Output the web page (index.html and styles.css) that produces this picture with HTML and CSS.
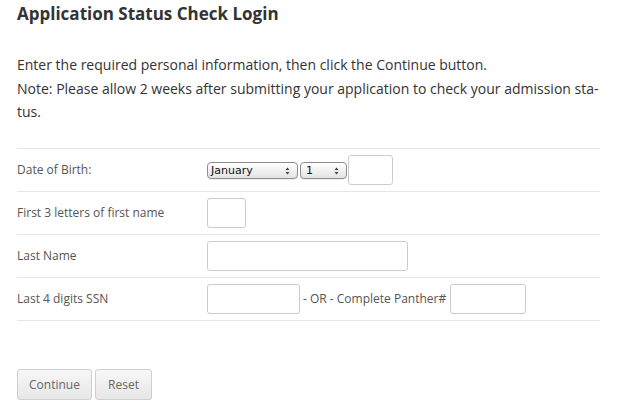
FILE: index.html
```html
<!DOCTYPE html>
<html>
<head>
<meta charset="utf-8">
<link rel="stylesheet" href="styles.css">
</head>
<body>
<div class="page">
  <h1 class="title">Application Status Check Login</h1>
  <p class="intro">Enter the required personal information, then click the Continue button.<br>Note: Please allow 2 weeks after submitting your application to check your admission sta-<br>tus.</p>
  <table class="form">
    <tr>
      <td class="label">Date of Birth:</td>
      <td class="field">
        <div class="inline">
          <span class="sel sel-month"><span class="sel-text">January</span><svg class="arrows" width="5" height="8" viewBox="0 0 5 8"><path d="M0.5 3 L2.5 0.5 L4.5 3 Z M0.5 5 L2.5 7.5 L4.5 5 Z" fill="#444"/></svg></span>
          <span class="sel sel-day"><span class="sel-text">1</span><svg class="arrows" width="5" height="8" viewBox="0 0 5 8"><path d="M0.5 3 L2.5 0.5 L4.5 3 Z M0.5 5 L2.5 7.5 L4.5 5 Z" fill="#444"/></svg></span>
          <input class="txt w-year" type="text">
        </div>
      </td>
    </tr>
    <tr>
      <td class="label">First 3 letters of first name</td>
      <td class="field"><input class="txt w-three" type="text"></td>
    </tr>
    <tr>
      <td class="label">Last Name</td>
      <td class="field"><input class="txt w-last" type="text"></td>
    </tr>
    <tr class="last">
      <td class="label">Last 4 digits SSN</td>
      <td class="field">
        <div class="inline">
          <input class="txt w-ssn" type="text">
          <span class="or">- OR - Complete Panther#</span>
          <input class="txt w-panther" type="text">
        </div>
      </td>
    </tr>
  </table>
  <div class="buttons">
    <button class="btn btn-continue" type="button">Continue</button>
    <button class="btn btn-reset" type="button">Reset</button>
  </div>
</div>
</body>
</html>
```
FILE: styles.css
```css
html, body {
  margin: 0;
  padding: 0;
  background: #fff;
}
body {
  font-family: "Open Sans", "DejaVu Sans", sans-serif;
  color: #333;
}
.page {
  padding: 0 30px 0 17px;
}
.title {
  margin: 2px 0 0;
  font-size: 17px;
  line-height: 24px;
  font-weight: 700;
  color: #333;
}
.intro {
  margin: 27px 0 0;
  font-size: 14px;
  line-height: 23.5px;
  color: #333;
}
.form {
  margin-top: 24px;
  width: 583px;
  border-collapse: separate;
  border-spacing: 0;
}
.form td {
  padding: 6px 0;
  height: 30px;
  vertical-align: middle;
  border-top: 1px solid #e6e6e6;
}
.form .last td {
  border-bottom: 1px solid #e6e6e6;
}
.label {
  width: 190px;
  font-size: 12px;
  color: #555;
}
.inline {
  display: flex;
  align-items: center;
}
.txt {
  display: block;
  box-sizing: border-box;
  height: 30px;
  margin: 0;
  padding: 4px 6px;
  border: 1px solid #ccc;
  border-radius: 3px;
  background: #fff;
  font-family: "Open Sans", sans-serif;
  font-size: 12px;
}
.w-year { width: 45px; margin-left: 1px; }
.w-three { width: 39px; }
.w-last { width: 201px; }
.w-ssn { width: 93px; }
.w-panther { width: 76px; }
.or {
  font-size: 12px;
  color: #555;
  margin: 0 4px 0 3px;
}
.sel {
  position: relative;
  display: inline-flex;
  align-items: center;
  box-sizing: border-box;
  height: 17px;
  margin-top: 1px;
  border: 1px solid #8d8d8d;
  border-radius: 4px;
  background: linear-gradient(#ffffff, #f1f1f1 50%, #e4e4e4);
  box-shadow: 0 1px 0 rgba(0,0,0,0.06);
  font-family: "DejaVu Sans", sans-serif;
  font-size: 11px;
  color: #111;
  padding-left: 3px;
}
.sel-month { width: 91px; }
.sel-day { width: 47px; margin-left: 2px; }
.sel-day .sel-text { padding-left: 2px; }
.sel-text { line-height: 15px; }
.arrows {
  position: absolute;
  right: 7px;
  top: 4px;
}
.buttons {
  display: flex;
  gap: 3px;
  margin-top: 48px;
}
.btn {
  box-sizing: border-box;
  height: 31px;
  border: 1px solid #cfcfcf;
  border-radius: 3px;
  background: linear-gradient(#f7f7f7, #e7e7e7);
  box-shadow: 0 1px 1px rgba(0,0,0,0.06);
  font-family: "Open Sans", sans-serif;
  font-size: 12px;
  color: #666;
  padding: 0;
}
.btn-continue { width: 75px; }
.btn-reset { width: 57px; }
```
